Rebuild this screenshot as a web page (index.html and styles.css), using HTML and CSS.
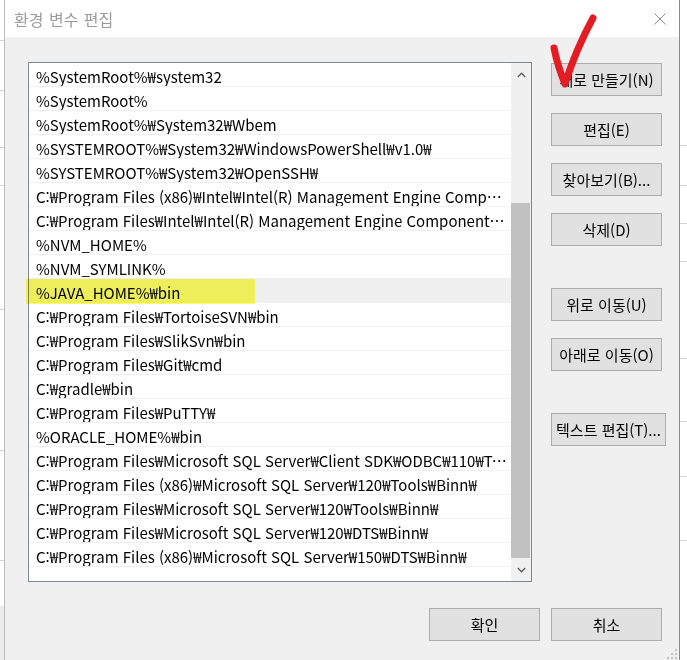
FILE: index.html
```html
<!DOCTYPE html>
<html lang="ko">
<head>
    <meta charset="utf-8">
    <link rel="stylesheet" href="styles.css">
</head>
<body>
    <div class="backdrop backdrop-left">
        <div class="bg-line" style="top: 40px"></div>
        <div class="bg-line" style="top: 90px"></div>
        <div class="bg-line" style="top: 147px"></div>
        <div class="bg-line" style="top: 185px"></div>
        <div class="bg-line" style="top: 309px"></div>
        <div class="bg-line" style="top: 450px"></div>
        <div class="bg-line" style="top: 560px"></div>
        <div class="bg-fill" style="top: 606px"></div>
    </div>

    <div class="dialog">
        <div class="titlebar">
            <span class="title">환경 변수 편집</span>
            <svg class="close" width="12" height="12" viewBox="0 0 12 12">
                <path d="M0.5 0.5 L11.5 11.5 M11.5 0.5 L0.5 11.5" stroke="#8c8c8c" stroke-width="1" fill="none"/>
            </svg>
        </div>

        <div class="dialog-body">
            <div class="main">
                <div class="path-list">
                    <div class="rows">
                        <div class="row">%SystemRoot%₩system32</div>
                        <div class="row">%SystemRoot%</div>
                        <div class="row">%SystemRoot%₩System32₩Wbem</div>
                        <div class="row">%SYSTEMROOT%₩System32₩WindowsPowerShell₩v1.0₩</div>
                        <div class="row">%SYSTEMROOT%₩System32₩OpenSSH₩</div>
                        <div class="row">C:₩Program Files (x86)₩Intel₩Intel(R) Management Engine Components₩DAL</div>
                        <div class="row">C:₩Program Files₩Intel₩Intel(R) Management Engine Components₩DAL</div>
                        <div class="row">%NVM_HOME%</div>
                        <div class="row">%NVM_SYMLINK%</div>
                        <div class="row selected">%JAVA_HOME%₩bin</div>
                        <div class="row">C:₩Program Files₩TortoiseSVN₩bin</div>
                        <div class="row">C:₩Program Files₩SlikSvn₩bin</div>
                        <div class="row">C:₩Program Files₩Git₩cmd</div>
                        <div class="row">C:₩gradle₩bin</div>
                        <div class="row">C:₩Program Files₩PuTTY₩</div>
                        <div class="row">%ORACLE_HOME%₩bin</div>
                        <div class="row">C:₩Program Files₩Microsoft SQL Server₩Client SDK₩ODBC₩110₩Tools₩Binn₩</div>
                        <div class="row">C:₩Program Files (x86)₩Microsoft SQL Server₩120₩Tools₩Binn₩</div>
                        <div class="row">C:₩Program Files₩Microsoft SQL Server₩120₩Tools₩Binn₩</div>
                        <div class="row">C:₩Program Files₩Microsoft SQL Server₩120₩DTS₩Binn₩</div>
                        <div class="row">C:₩Program Files (x86)₩Microsoft SQL Server₩150₩DTS₩Binn₩</div>
                    </div>
                    <div class="scrollbar">
                        <div class="scroll-arrow up">
                            <svg width="9" height="6" viewBox="0 0 9 6"><path d="M0.8 5 L4.5 1.3 L8.2 5" stroke="#606060" stroke-width="1.5" fill="none"/></svg>
                        </div>
                        <div class="track">
                            <div class="thumb"></div>
                        </div>
                        <div class="scroll-arrow down">
                            <svg width="9" height="6" viewBox="0 0 9 6"><path d="M0.8 1 L4.5 4.7 L8.2 1" stroke="#606060" stroke-width="1.5" fill="none"/></svg>
                        </div>
                    </div>
                    <!-- highlighter mark over the JAVA_HOME row -->
                    <div class="marker"></div>
                </div>

                <div class="actions">
                    <div class="action-group">
                        <button class="btn">새로 만들기(N)</button>
                        <button class="btn">편집(E)</button>
                        <button class="btn">찾아보기(B)...</button>
                        <button class="btn">삭제(D)</button>
                    </div>
                    <div class="action-group">
                        <button class="btn">위로 이동(U)</button>
                        <button class="btn">아래로 이동(O)</button>
                    </div>
                    <div class="action-group">
                        <button class="btn btn-wide">텍스트 편집(T)...</button>
                    </div>
                </div>
            </div>

            <div class="footer">
                <button class="btn">확인</button>
                <button class="btn">취소</button>
            </div>
        </div>

        <!-- hand drawn check over the first button -->
        <svg class="check" width="52" height="85" viewBox="0 0 52 85">
            <path d="M5 38 C7 48 11 62 16 74 C22 55 32 30 44 8" stroke="#e41c24" stroke-width="7" stroke-linecap="round" stroke-linejoin="round" fill="none"/>
        </svg>

        <svg class="grip" width="10" height="10" viewBox="0 0 10 10">
            <g fill="#c4c4c4">
                <rect x="8" y="0" width="2" height="2"/>
                <rect x="4" y="4" width="2" height="2"/><rect x="8" y="4" width="2" height="2"/>
                <rect x="0" y="8" width="2" height="2"/><rect x="4" y="8" width="2" height="2"/><rect x="8" y="8" width="2" height="2"/>
            </g>
        </svg>
    </div>

    <div class="backdrop backdrop-right">
        <div class="bg-line" style="top: 145px"></div>
        <div class="bg-line" style="top: 185px"></div>
        <div class="bg-line" style="top: 223px"></div>
        <div class="bg-line" style="top: 261px"></div>
        <div class="bg-line" style="top: 358px"></div>
        <div class="bg-line" style="top: 421px"></div>
        <div class="bg-line" style="top: 476px"></div>
        <div class="bg-line" style="top: 540px"></div>
    </div>
</body>
</html>
```

FILE: styles.css
```css
body {
    margin: 0;
    width: 687px;
    height: 660px;
    overflow: hidden;
    display: flex;
    background-color: #FFF;
    font-family: "Noto Sans CJK KR", "Noto Sans", sans-serif;
    color: #000;
}
.backdrop {
    position: relative;
    height: 100%;
    background-color: #FFF;
    overflow: hidden;
}
.backdrop-left {
    width: 4px;
}
.backdrop-right {
    width: 7px;
}
.bg-line {
    position: absolute;
    left: 0;
    right: 0;
    height: 1px;
    background-color: #d4d4d4;
}
.bg-fill {
    position: absolute;
    left: 0;
    right: 0;
    bottom: 0;
    background-color: #ececec;
}
.dialog {
    position: relative;
    width: 676px;
    height: 100%;
    box-sizing: border-box;
    border-left: 1px solid #bdbdbd;
    border-right: 1px solid #8a8a8a;
    display: flex;
    flex-direction: column;
}
.titlebar {
    height: 37px;
    flex-shrink: 0;
    background-color: #FFF;
    display: flex;
    align-items: center;
    justify-content: space-between;
    padding: 0 13px 0 9px;
}
.title {
    font-size: 16px;
    color: #9b9b9b;
    word-spacing: 1px;
}
.dialog-body {
    flex: 1;
    background-color: #F0F0F0;
    padding: 25px 0 0 23px;
    display: flex;
    flex-direction: column;
}
.main {
    display: flex;
    gap: 19px;
}

/* list box */
.path-list {
    position: relative;
    width: 502px;
    height: 518px;
    border: 1px solid #828790;
    background-color: #FFF;
    display: flex;
}
.rows {
    width: 482px;
}
.row {
    height: 23px;
    line-height: 27px;
    border-bottom: 1px solid #F0F0F0;
    padding: 0 2px 0 7px;
    font-size: 15px;
    white-space: nowrap;
    overflow: hidden;
    text-overflow: ellipsis;
}
.row.selected {
    background-color: #F0F0F0;
}
.scrollbar {
    width: 20px;
    background-color: #F0F0F0;
    display: flex;
    flex-direction: column;
}
.scroll-arrow {
    display: flex;
    align-items: center;
    justify-content: center;
}
.scroll-arrow.up {
    height: 24px;
}
.scroll-arrow.down {
    height: 22px;
}
.track {
    flex: 1;
}
.thumb {
    margin: 116px 1px 0 0;
    height: 355px;
    background-color: #C1C1C1;
}
.marker {
    position: absolute;
    left: -3px;
    top: 216px;
    width: 229px;
    height: 25px;
    background-color: #FDFD60;
    mix-blend-mode: multiply;
}

/* buttons */
.actions {
    margin-top: 1px;
    display: flex;
    flex-direction: column;
    gap: 42px;
}
.action-group {
    display: flex;
    flex-direction: column;
    gap: 17px;
}
.btn {
    box-sizing: border-box;
    width: 111px;
    height: 33px;
    padding: 0;
    border: 1px solid #ADADAD;
    background-color: #E1E1E1;
    font-family: "Noto Sans CJK KR", "Noto Sans", sans-serif;
    font-size: 15px;
    color: #000;
    white-space: nowrap;
}
.btn-wide {
    width: 115px;
}
.footer {
    margin-top: 26px;
    padding-right: 17px;
    display: flex;
    justify-content: flex-end;
    gap: 11px;
}
.check {
    position: absolute;
    left: 544px;
    top: 10px;
}
.grip {
    position: absolute;
    right: 2px;
    bottom: 1px;
}
```
